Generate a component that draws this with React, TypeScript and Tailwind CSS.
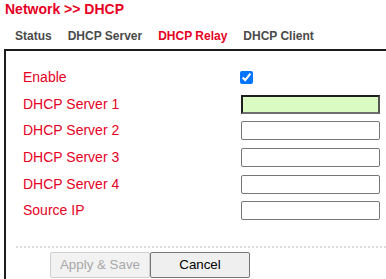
import React from 'react';

const App = () => {
  const tabs = [
    { name: "Status", active: false },
    { name: "DHCP Server", active: false },
    { name: "DHCP Relay", active: true },
    { name: "DHCP Client", active: false }
  ];

  const servers = ["DHCP Server 2", "DHCP Server 3", "DHCP Server 4", "Source IP"];

  return (
    <div className="w-[386px] h-[279px] overflow-hidden bg-white" style={{ fontFamily: '"Liberation Sans", Arial, sans-serif' }}>
      <h1 className="pl-[5px] pt-[1px] h-[20px] text-[14px] leading-[17px] font-bold text-[#e6001f]">
        Network &gt;&gt; DHCP
      </h1>

      <div className="flex gap-4 pl-[15px] pt-[9px] h-[29px] text-[12px] leading-[14px] font-bold">
        {tabs.map((tab) => (
          <span key={tab.name} className={tab.active ? "text-[#e6001f]" : "text-[#4a4a4a]"}>
            {tab.name}
          </span>
        ))}
      </div>

      <div className="ml-[4px] border-l-2 border-t-2 border-[#1c1c1c] pt-[13px] h-[240px]">
        <div className="flex items-center h-[26.7px]">
          <label className="w-[235px] pl-[17px] text-[14px] text-[#e6001f]">Enable</label>
          <input type="checkbox" defaultChecked className="w-[13px] h-[13px] m-0 -ml-px" />
        </div>

        <div className="flex items-center h-[26.7px]">
          <label className="w-[235px] pl-[17px] text-[14px] text-[#e6001f]">DHCP Server 1</label>
          <input
            type="text"
            className="w-[139px] h-[19px] bg-[#dafcc2] border-2 border-[#1f1f1f] border-b-[#6e6e6e] border-r-[#555] outline-none"
          />
        </div>

        {servers.map((label) => (
          <div key={label} className="flex items-center h-[26.7px]">
            <label className="w-[235px] pl-[17px] text-[14px] text-[#e6001f]">{label}</label>
            <input
              type="text"
              className="w-[139px] h-[19px] bg-white border border-[#767676] rounded-[2px] outline-none"
            />
          </div>
        ))}

        <div className="ml-[10px] mt-[22px] border-t-2 border-dotted border-[#dcdcdc]" />

        <div className="flex ml-[44px] mt-[4px] text-[13.33px]">
          <button
            disabled
            className="w-[100px] h-[26px] border border-[#cfcfcf] rounded-[2px] bg-[#f2f2f2] text-[#a8a8a8]"
          >
            Apply &amp; Save
          </button>
          <button className="w-[100px] h-[26px] border border-[#767676] rounded-[2px] bg-[#efefef] text-black">
            Cancel
          </button>
        </div>
      </div>
    </div>
  );
};

export default App;
